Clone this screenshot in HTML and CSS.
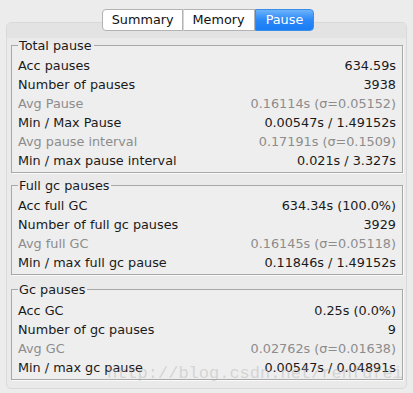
FILE: index.html
```html
<!DOCTYPE html>
<html lang="en">
<head>
  <meta charset="UTF-8">
  <title>Pause</title>
  <link rel="stylesheet" href="styles.css">
</head>
<body>
  <div class="tabs">
    <span class="tab">Summary</span>
    <span class="tab">Memory</span>
    <span class="tab active">Pause</span>
  </div>
  <div class="panel">
    <div class="panel-band"></div>
    <div class="panel-body">
      <fieldset class="group">
        <legend>Total pause</legend>
        <div class="row"><span>Acc pauses</span><span>634.59s</span></div>
        <div class="row"><span>Number of pauses</span><span>3938</span></div>
        <div class="row dim"><span>Avg Pause</span><span>0.16114s (σ=0.05152)</span></div>
        <div class="row"><span>Min / Max Pause</span><span>0.00547s / 1.49152s</span></div>
        <div class="row dim"><span>Avg pause interval</span><span>0.17191s (σ=0.1509)</span></div>
        <div class="row"><span>Min / max pause interval</span><span>0.021s / 3.327s</span></div>
      </fieldset>
      <fieldset class="group">
        <legend>Full gc pauses</legend>
        <div class="row"><span>Acc full GC</span><span>634.34s (100.0%)</span></div>
        <div class="row"><span>Number of full gc pauses</span><span>3929</span></div>
        <div class="row dim"><span>Avg full GC</span><span>0.16145s (σ=0.05118)</span></div>
        <div class="row"><span>Min / max full gc pause</span><span>0.11846s / 1.49152s</span></div>
      </fieldset>
      <fieldset class="group">
        <legend>Gc pauses</legend>
        <div class="row"><span>Acc GC</span><span>0.25s (0.0%)</span></div>
        <div class="row"><span>Number of gc pauses</span><span>9</span></div>
        <div class="row dim"><span>Avg GC</span><span>0.02762s (σ=0.01638)</span></div>
        <div class="row"><span>Min / max gc pause</span><span>0.00547s / 0.04891s</span></div>
      </fieldset>
    </div>
  </div>
  <div class="watermark">http://blog.csdn.net/renfufei</div>
</body>
</html>
```

FILE: styles.css
```css
body {
  margin: 0;
  background: #ececec;
  font-family: "DejaVu Sans", "Liberation Sans", sans-serif;
  font-size: 12.8px;
  color: #1a1a1a;
  position: relative;
  height: 393px;
  overflow: hidden;
}

.tabs {
  display: flex;
  justify-content: center;
  padding-top: 9px;
  padding-left: 3px;
  position: relative;
  z-index: 2;
}

.tab {
  height: 20px;
  line-height: 20px;
  padding: 0 9px;
  background: #fff;
  border: 1px solid #b3b3b3;
  border-left: 1px solid #d6d6d6;
  color: #111;
}

.tab:first-child {
  border-left: 1px solid #b3b3b3;
  border-radius: 4px 0 0 4px;
  padding: 0 8px 0 9px;
}

.tab.active {
  background: linear-gradient(to bottom, #6db3fb, #2a88f7 50%, #1a7df5);
  border-color: #3b8ee8;
  color: #fff;
  border-radius: 0 4px 4px 0;
  padding: 0 10px;
}

.panel {
  margin: -9px 6px 0;
  border: 1px solid #d9d9d9;
  border-radius: 5px;
  background: #eaeaea;
  height: 365px;
  overflow: hidden;
}

.panel-band {
  height: 15px;
  background: #e3e3e3;
}

.panel-body {
  padding: 0 3px 0 4px;
}

.group {
  border: 1px solid #a8a8a8;
  box-shadow: 1px 1px 0 #fafafa;
  margin: 0;
  padding: 3px 6px 2px 6px;
  background: #eeeeee;
}

.group + .group {
  margin-top: 5px;
}

.group:last-child {
  margin-top: 7px;
  padding-top: 4px;
}

.group legend {
  padding: 0 2px 0 1px;
  line-height: 15px;
}

.row {
  display: flex;
  justify-content: space-between;
  height: 19px;
  line-height: 19px;
}

.row.dim {
  color: #8c8c8c;
}

.watermark {
  position: absolute;
  left: 107px;
  top: 364px;
  font-family: "Liberation Mono", monospace;
  font-size: 17px;
  color: rgba(170, 170, 170, 0.4);
  pointer-events: none;
}
```
